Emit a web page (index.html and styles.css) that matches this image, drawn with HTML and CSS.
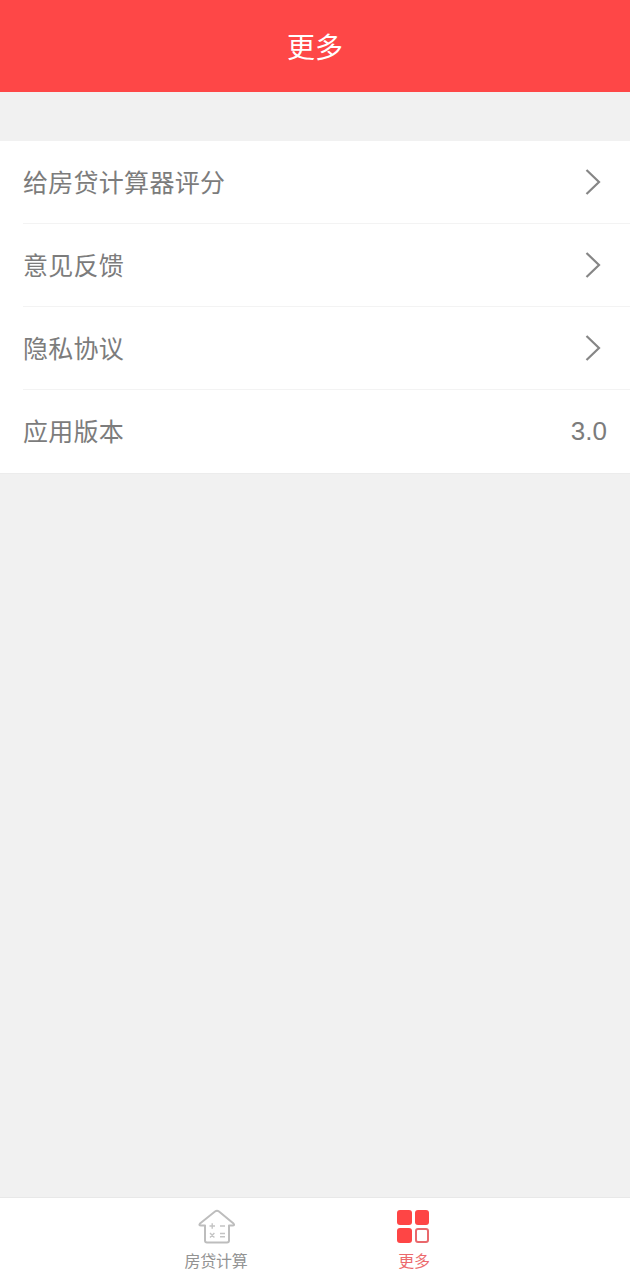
FILE: index.html
```html
<!DOCTYPE html>
<html lang="zh-CN">
<head>
    <meta charset="UTF-8">
    <title>更多</title>
    <link rel="stylesheet" href="styles.css">
</head>
<body>
    <div class="page">
        <div class="header">更多</div>
        <div class="list">
            <div class="row">
                <span class="label">给房贷计算器评分</span>
                <svg class="arrow" width="16" height="26" viewBox="0 0 16 26"><path d="M1.5 1 L14 13 L1.5 25"/></svg>
            </div>
            <div class="row">
                <span class="label">意见反馈</span>
                <svg class="arrow" width="16" height="26" viewBox="0 0 16 26"><path d="M1.5 1 L14 13 L1.5 25"/></svg>
            </div>
            <div class="row">
                <span class="label">隐私协议</span>
                <svg class="arrow" width="16" height="26" viewBox="0 0 16 26"><path d="M1.5 1 L14 13 L1.5 25"/></svg>
            </div>
            <div class="row">
                <span class="label">应用版本</span>
                <span class="version">3.0</span>
            </div>
        </div>
        <div class="spacer"></div>
        <div class="tabbar">
            <div class="tab">
                <svg class="tabIcon" width="38" height="36" viewBox="-1 -1 38 36">
                    <g class="houseLine">
                        <path d="M7 16.5 V31.5 Q7 33.5 9 33.5 H29 Q31 33.5 31 31.5 V16.5 H34.5 Q37 16.5 35.5 14.5 L21 2.5 Q19 1 17 2.5 L2 14.5 Q0.5 16.5 3 16.5 Z"/>
                    </g>
                    <g class="houseSign">
                        <path d="M11.5 17 H17 M14.2 14.2 V19.8 M22 17 H27 M12 24 L16.4 28.4 M16.4 24 L12 28.4 M22 24.5 H27 M22 27.8 H27"/>
                    </g>
                </svg>
                <span class="tabText">房贷计算</span>
            </div>
            <div class="tab active">
                <svg class="tabIcon moreIcon" width="36" height="36" viewBox="0 0 36 36">
                    <rect x="2" y="2" width="15" height="15" rx="3" fill="#fe4545"/>
                    <rect x="20" y="2" width="14" height="15" rx="3" fill="#fe4545"/>
                    <rect x="2" y="20" width="15" height="15" rx="3" fill="#fe4545"/>
                    <rect x="21" y="21" width="12" height="13" rx="2" fill="#fff" stroke="#e9686c" stroke-width="2"/>
                </svg>
                <span class="tabText">更多</span>
            </div>
        </div>
    </div>
</body>
</html>
```

FILE: styles.css
```css
html,body{
    margin: 0;
    padding: 0;
}
body{
    font-family: "Noto Sans CJK SC", "Liberation Sans", sans-serif;
    background-color: #f1f1f1;
}
.page{
    width: 630px;
    height: 1280px;
    display: flex;
    flex-direction: column;
    overflow: hidden;
}
.header{
    height: 92px;
    line-height: 92px;
    text-align: center;
    background-color: #fe4747;
    color: #fff;
    font-size: 28px;
}
.list{
    margin-top: 49px;
    background-color: #fff;
    border-bottom: 1px solid #ececec;
}
.row{
    height: 83px;
    margin-left: 23px;
    padding-right: 23px;
    border-bottom: 1px solid #f3f3f3;
    display: flex;
    align-items: center;
    justify-content: space-between;
    box-sizing: border-box;
    color: #7c7c7c;
    font-size: 25px;
}
.row:last-child{
    border-bottom-color: #fff;
}
.label{
    letter-spacing: 0.28px;
    margin-bottom: 2px;
}
.version{
    font-family: "Liberation Sans", sans-serif;
    font-size: 26px;
    margin-top: 1px;
}
.arrow{
    margin-right: 6px;
}
.arrow path{
    fill: none;
    stroke: #868686;
    stroke-width: 2.2;
}
.spacer{
    flex: 1;
}
.tabbar{
    height: 82px;
    background-color: #fff;
    border-top: 1px solid #e8e8e8;
    display: flex;
    justify-content: center;
    gap: 134px;
}
.tab{
    width: 64px;
    display: flex;
    flex-direction: column;
    align-items: center;
    padding-top: 10px;
    color: #939393;
    font-size: 16px;
    letter-spacing: -0.2px;
}
.tabIcon{
    display: block;
}
.moreIcon{
    margin-left: -2px;
}
.tabText{
    line-height: 24px;
    margin-top: 4px;
}
.active{
    color: #ec6a6d;
}
.houseLine path{
    fill: none;
    stroke: #bdbdbd;
    stroke-width: 2;
    stroke-linejoin: round;
}
.houseSign path{
    fill: none;
    stroke: #c4c4c4;
    stroke-width: 1.4;
}
```
